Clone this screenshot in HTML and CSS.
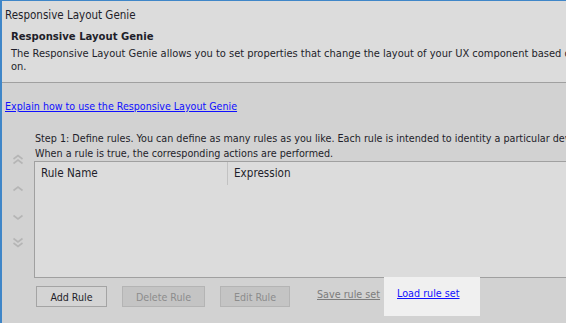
FILE: index.html
```html
<!DOCTYPE html>
<html>
<head>
<meta charset="utf-8">
<link rel="stylesheet" href="styles.css">
</head>
<body>
<div class="frame">
  <div class="titlebar">Responsive Layout Genie</div>
  <div class="header">
    <div class="h-title">Responsive Layout Genie</div>
    <div class="h-desc">The Responsive Layout Genie allows you to set properties that change the layout of your UX component based on the device it is running<br>on.</div>
  </div>
  <div class="main">
    <a class="explain" href="#">Explain how to use the Responsive Layout Genie</a>
    <div class="rules">
      <div class="arrows">
        <svg class="arr" width="12" height="11" viewBox="0 0 12 11"><path d="M1.5 5 L6 1.5 L10.5 5 M1.5 9.5 L6 6 L10.5 9.5" fill="none" stroke="#b5b5b5" stroke-width="1.6"/></svg>
        <svg class="arr a2" width="12" height="7" viewBox="0 0 12 7"><path d="M1.5 5.5 L6 2 L10.5 5.5" fill="none" stroke="#b5b5b5" stroke-width="1.6"/></svg>
        <svg class="arr a3" width="12" height="7" viewBox="0 0 12 7"><path d="M1.5 1.5 L6 5 L10.5 1.5" fill="none" stroke="#b5b5b5" stroke-width="1.6"/></svg>
        <svg class="arr a4" width="12" height="11" viewBox="0 0 12 11"><path d="M1.5 1.5 L6 5 L10.5 1.5 M1.5 6 L6 9.5 L10.5 6" fill="none" stroke="#b5b5b5" stroke-width="1.6"/></svg>
      </div>
      <div class="content">
        <div class="step">Step 1: Define rules. You can define as many rules as you like. Each rule is intended to identity a particular device type.<br>When a rule is true, the corresponding actions are performed.</div>
        <div class="table">
          <div class="thead">
            <div class="th th1">Rule Name</div>
            <div class="th th2">Expression</div>
          </div>
        </div>
        <div class="actions">
          <button class="btn b-add">Add Rule</button>
          <button class="btn b-del dis">Delete Rule</button>
          <button class="btn b-edit dis">Edit Rule</button>
          <a class="save" href="#">Save rule set</a>
          <div class="loadbox"><a class="load" href="#">Load rule set</a></div>
        </div>
      </div>
    </div>
  </div>
</div>
</body>
</html>
```
FILE: styles.css
```css
html, body {
  margin: 0;
  padding: 0;
}
body {
  width: 566px;
  height: 323px;
  overflow: hidden;
  background: #d2d2d2;
  font-family: "DejaVu Sans Condensed", "Liberation Sans", sans-serif;
  font-size: 10.6px;
  color: #1e1e2a;
}
.frame {
  height: 323px;
  box-sizing: border-box;
  border-left: 2px solid #3f86c8;
  border-top: 1px solid #3f86c8;
  overflow: hidden;
}
.titlebar {
  height: 28px;
  line-height: 28px;
  padding-left: 3px;
  background: #dcdcdc;
  font-size: 11.5px;
}
.header {
  box-sizing: border-box;
  height: 54px;
  width: 700px;
  padding-left: 9px;
  background: #dcdcdc;
  border-bottom: 1px solid #a0a0a0;
}
.h-title {
  font-weight: bold;
  font-size: 11.2px;
  line-height: 16px;
}
.h-desc {
  margin-top: 2px;
  white-space: nowrap;
  line-height: 13px;
  font-size: 11px;
}
.main {
  padding-top: 16px;
}
.explain {
  display: block;
  margin-left: 3px;
  line-height: 14px;
  color: #1010ff;
  text-decoration: underline;
}
.rules {
  display: flex;
  margin-top: 18px;
}
.arrows {
  width: 32px;
  flex: none;
  display: flex;
  flex-direction: column;
  align-items: center;
  padding-top: 23px;
}
.a2 { margin-top: 20px; }
.a3 { margin-top: 22px; }
.a4 { margin-top: 16px; }
.content {
  flex: none;
  width: 700px;
}
.step {
  padding-left: 1px;
  line-height: 15px;
  white-space: nowrap;
  font-size: 10.7px;
}
.table {
  box-sizing: border-box;
  height: 117px;
  width: 620px;
  border: 1px solid #a0a0a0;
  background: #dcdcdc;
}
.thead {
  display: flex;
  height: 23px;
}
.th {
  line-height: 22px;
  padding-left: 6px;
  font-size: 11.6px;
}
.th1 {
  width: 186px;
  border-right: 1px solid #c2c2c2;
}
.actions {
  display: flex;
  align-items: flex-start;
  padding-left: 2px;
}
.btn {
  margin-top: 8px;
  height: 21px;
  box-sizing: border-box;
  padding: 0;
  font: inherit;
  font-size: 10.6px;
  color: #1e1e2a;
  background: #d4d4d4;
  border: 1px solid #a4a4a4;
  margin-right: 15px;
}
.b-add { width: 71px; }
.b-del { width: 83px; }
.b-edit { width: 70px; margin-right: 27px; }
.dis {
  background: #c4c4c4;
  border-color: #b4b4b4;
  color: #8c8c8c;
}
.save {
  margin-top: 8px;
  line-height: 17px;
  color: #7c7c7c;
  text-decoration: underline;
  font-size: 10.7px;
}
.loadbox {
  margin-top: -1px;
  margin-left: 4px;
  width: 96px;
  height: 39px;
  box-sizing: border-box;
  padding-left: 13px;
  padding-top: 8px;
  background: #f0f0f0;
}
.load {
  line-height: 17px;
  color: #1010ff;
  text-decoration: underline;
  font-size: 10.7px;
}
```
